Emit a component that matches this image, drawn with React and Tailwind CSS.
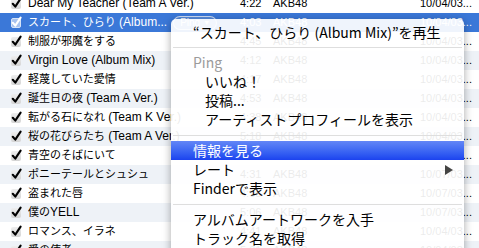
import React from 'react';

const CJK = /([\u3000-\u30ff\u4e00-\u9fff\uff00-\uffef]+)/;

function Mixed({ text, cjkClass }) {
  const parts = text.split(CJK);
  return (
    <>
      {parts.map((p, i) =>
        i % 2 === 1 ? (
          <span key={i} className={cjkClass}>{p}</span>
        ) : (
          <span key={i}>{p}</span>
        )
      )}
    </>
  );
}

const rows = [
  { t: 'Dear My Teacher (Team A Ver.)', time: '4:22', d: '10/04/03...' },
  { t: 'スカート、ひらり (Album...', time: '4:03', d: '10/04/03...', sel: true },
  { t: '制服が邪魔をする', time: '4:45', d: '10/04/03...' },
  { t: 'Virgin Love (Album Mix)', time: '4:12', d: '10/04/03...' },
  { t: '軽蔑していた愛情', time: '4:17', d: '10/04/03...' },
  { t: '誕生日の夜 (Team A Ver.)', time: '4:53', d: '10/04/03...' },
  { t: '転がる石になれ (Team K Ver.)', time: '4:38', d: '10/04/03...' },
  { t: '桜の花びらたち (Team A Ver.)', time: '5:18', d: '10/04/03...' },
  { t: '青空のそばにいて', time: '4:22', d: '10/04/03...' },
  { t: 'ポニーテールとシュシュ', time: '4:31', d: '10/07/03...' },
  { t: '盗まれた唇', time: '4:55', d: '10/07/03...' },
  { t: '僕のYELL', time: '5:06', d: '10/07/03...' },
  { t: 'ロマンス、イラネ', time: '4:41', d: '10/04/03...' },
  { t: '愛の使者', time: '5:01', d: '10/04/03...' },
];

function Check({ sel }) {
  return (
    <div className="relative w-[10px] h-[10px]">
      <div
        className={
          sel
            ? 'absolute inset-0 rounded-[2px] bg-[#a8c3ef] border border-[#d6e3f7]'
            : 'absolute inset-0 rounded-[2px] bg-linear-to-b from-[#eeeeee] to-[#d4d4d4]'
        }
      />
      <svg
        className="absolute left-[0px] top-[-2px]"
        width="11"
        height="12"
        viewBox="0 0 11 12"
      >
        <path
          d="M1.8 6.8 L4.3 9.6 L9.6 1.6"
          fill="none"
          stroke={sel ? '#ffffff' : '#000000'}
          strokeWidth="2.1"
          strokeLinecap="round"
          strokeLinejoin="round"
        />
      </svg>
    </div>
  );
}

function Row({ r, i }) {
  const bg = r.sel ? 'bg-[#3b78d8]' : i % 2 === 0 ? 'bg-white' : 'bg-[#eef2f7]';
  const fg = r.sel ? 'text-white' : 'text-black';
  return (
    <div className={`h-[19px] flex items-center ${bg} ${fg}`}>
      <div className="w-[28px] pl-[11px] flex items-center">
        <Check sel={r.sel} />
      </div>
      <div className="w-[212px] h-[19px] leading-[19px] whitespace-nowrap overflow-hidden text-[12px]">
        <Mixed text={r.t} cjkClass="text-[11px]" />
        {r.sel && (
          <span className="ml-[6px] inline-flex align-middle h-[14px] px-[6px] items-center gap-[3px] rounded-full border border-white/70 bg-white/15 text-[10px] leading-none text-white">
            <span>Ping</span>
            <span className="text-[7px]">▼</span>
          </span>
        )}
      </div>
      <div className="w-[33px] text-[11px] whitespace-nowrap">{r.time}</div>
      <div className="w-[147px] text-[11px] whitespace-nowrap">AKB48</div>
      <div className="flex-1 text-[11px] whitespace-nowrap overflow-hidden">{r.d}</div>
    </div>
  );
}

function Item({ children, sub, hi, arrow }) {
  return (
    <div
      className={`h-[19px] flex items-center whitespace-nowrap ${sub ? 'pl-[34px]' : 'pl-[22px]'} ${
        hi ? 'bg-linear-to-b from-[#6386f6] to-[#1c42ef] text-white' : 'text-black'
      }`}
    >
      <span>{children}</span>
      {arrow && (
        <svg className="ml-auto mr-[11px]" width="8" height="10" viewBox="0 0 8 10">
          <polygon points="0,0 8,5 0,10" fill="#444444" />
        </svg>
      )}
    </div>
  );
}

function Sep({ h }) {
  return (
    <div className={`${h} flex items-center px-[2px]`}>
      <div className="h-px w-full bg-[#dedede]" />
    </div>
  );
}

export default function App() {
  return (
    <div
      className="relative w-[479px] h-[248px] overflow-hidden bg-white"
      style={{ fontFamily: '"Liberation Sans", "Noto Sans CJK JP", sans-serif' }}
    >
      <div className="-mt-[6px]">
        {rows.map((r, i) => (
          <Row key={i} r={r} i={i} />
        ))}
      </div>

      <div
        className="absolute left-[171px] top-[19px] w-[293px] h-[240px] rounded-t-[5px] bg-white/[0.92] pt-[4px] text-[14px] shadow-[0_2px_8px_rgba(0,0,0,0.35)]"
        style={{ fontFamily: '"Noto Sans CJK JP", "Liberation Sans", sans-serif' }}
      >
        <Item>“スカート、ひらり (Album Mix)”を再生</Item>
        <Sep h="h-[11px]" />
        <div className="h-[19px] flex items-center pl-[22px] text-[#9b9b9b]">Ping</div>
        <Item sub>いいね！</Item>
        <Item sub>投稿...</Item>
        <Item sub>アーティストプロフィールを表示</Item>
        <Sep h="h-[12px]" />
        <Item hi>情報を見る</Item>
        <Item arrow>レート</Item>
        <Item>Finderで表示</Item>
        <Sep h="h-[12px]" />
        <Item>アルバムアートワークを入手</Item>
        <Item>トラック名を取得</Item>
      </div>
    </div>
  );
}
